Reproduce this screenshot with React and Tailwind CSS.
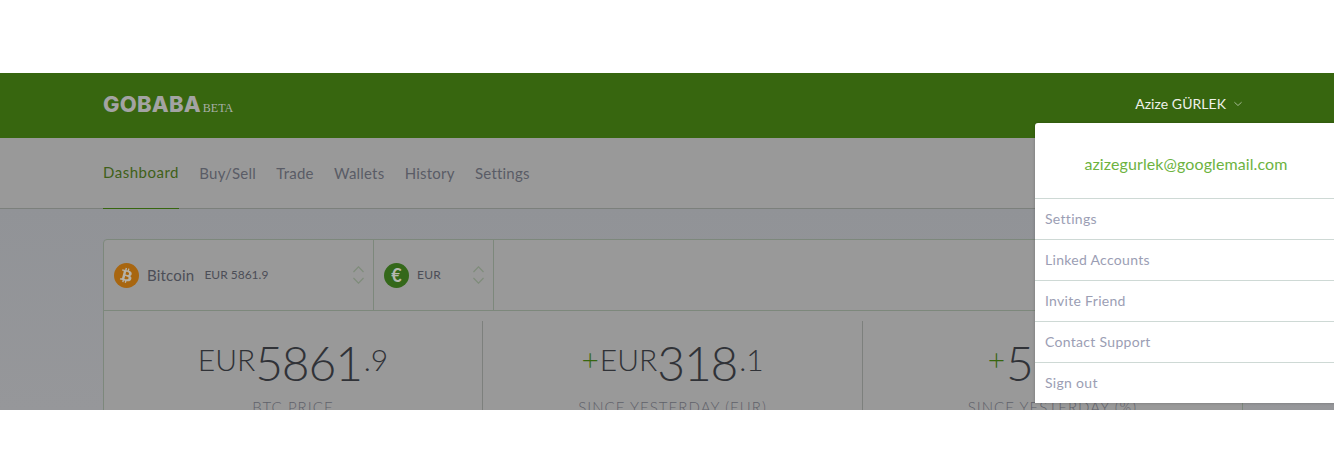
import React from "react";
import { ChevronDown } from "lucide-react";
import { FaBtc } from "react-icons/fa";

const nav = ["Buy/Sell", "Trade", "Wallets", "History", "Settings"];
const menu = ["Settings", "Linked Accounts", "Invite Friend", "Contact Support", "Sign out"];

function Updown() {
  return (
    <svg width="11" height="18" viewBox="0 0 11 18" fill="none" stroke="#7f8c7b" strokeWidth="1.2" className="block">
      <path d="M0.5 6 L5.5 0.8 L10.5 6" />
      <path d="M0.5 12 L5.5 17.2 L10.5 12" />
    </svg>
  );
}

function Stat({ plus, cur, big, small, label, className }) {
  return (
    <div className={`h-full flex flex-col items-center ${className}`}>
      <div className="flex items-start text-[#303237] h-[62px] pt-[18px] leading-none font-light">
        {plus && <span className="text-[30px] mt-[5px] text-[#37660f] mr-[1px]">+</span>}
        {cur && <span className="text-[30px] mt-[5px]">{cur}</span>}
        <span className="text-[48px] tracking-[-1.2px]">{big}</span>
        <span className="text-[30px] mt-[5px] ml-[2px]">{small}</span>
      </div>
      <div className="mt-[14px] text-[15px] tracking-[1.05px] font-light text-[#5f616a] uppercase leading-5 whitespace-nowrap">{label}</div>
    </div>
  );
}

export default function App() {
  return (
    <div className="h-[460px] bg-white pt-[73px] overflow-hidden" style={{ fontFamily: "Lato, sans-serif" }}>
      <div className="relative w-[1334px] h-[337px] overflow-hidden bg-[#999999]">
        <header className="h-[65px] bg-[#37660f] flex items-center justify-between pl-[103px] pr-[90px]">
          <div className="flex items-baseline pb-[2px]">
            <span className="text-[22px] font-extrabold text-[#a3a3a3] tracking-[0.2px] leading-none" style={{ fontFamily: "Inter, sans-serif" }}>GOBABA</span>
            <span className="ml-[2px] text-[12px] text-[#a9b0a8]" style={{ fontFamily: "'Liberation Serif', serif" }}>BETA</span>
          </div>
          <div className="flex items-center gap-[6px] text-[14px] tracking-[0.05px] text-[#eef1ea] pb-[4px]">
            <span>Azize GÜRLEK</span>
            <ChevronDown size={12} strokeWidth={1.25} className="text-[#dbe3d3] scale-x-110" />
          </div>
        </header>

        <nav className="h-[71px] border-b border-[#7c807c] pl-[103px] flex gap-[20.4px] bg-[#999999]">
          <div className="h-[71px] flex items-center text-[15px] tracking-[0.5px] pb-[1px] text-[#3f6018] border-b border-[#37660f]">Dashboard</div>
          {nav.map((n) => (
            <div key={n} className="h-[71px] flex items-center text-[15px] tracking-[0.2px] pb-[1px] text-[#5a5c66]">
              {n}
            </div>
          ))}
        </nav>

        <main className="bg-gradient-to-b from-[#919397] to-[#96979a] h-[201px] pt-[30px] px-[103px]">
          <div className="w-[1140px] h-[300px] border border-[#7d887c] rounded-tl-[4px] bg-[#999999]">
            <div className="h-[71px] border-b border-[#7d887c] flex">
              <div className="w-[270px] border-r border-[#7d887c] flex items-center pl-[10px] pr-[9px]">
                <div className="w-[25px] h-[25px] rounded-full bg-[#a86610] flex items-center justify-center text-[#b5b2a8]">
                  <FaBtc size={15} className="rotate-[14deg]" />
                </div>
                <span className="ml-[8px] text-[15px] tracking-[0.2px] text-[#4c4e57]">Bitcoin</span>
                <span className="ml-[10px] text-[12px] text-[#4c4e57]">EUR 5861.9</span>
                <div className="ml-auto"><Updown /></div>
              </div>
              <div className="w-[120px] border-r border-[#7d887c] flex items-center pl-[10px] pr-[9px]">
                <div className="w-[25px] h-[25px] rounded-full bg-[#34681a] flex items-center justify-center text-[#b5b8b0] text-[18px] font-bold leading-none">€</div>
                <span className="ml-[8px] text-[12px] tracking-[0.2px] text-[#4c4e57]">EUR</span>
                <div className="ml-auto"><Updown /></div>
              </div>
            </div>
            <div className="pt-[10px] h-[120px] flex">
              <Stat cur="EUR" big="5861" small=".9" label="BTC Price" className="w-[379px] border-r border-[#7d807d]" />
              <Stat plus cur="EUR" big="318" small=".1" label="Since yesterday (EUR)" className="w-[380px] border-r border-[#7d807d]" />
              <Stat plus big="5" small=".749%" label="Since yesterday (%)" className="flex-1" />
            </div>
          </div>
        </main>

        <div className="absolute left-[1035px] top-[50px] w-[304px] bg-white rounded-tl-[3px] shadow-[0_0_3px_rgba(0,0,0,0.25)]">
          <div className="h-[75px] flex items-center justify-center text-[16px] tracking-[0.1px] text-[#6db33f] pr-[2px] pt-[6px]">
            azizegurlek@googlemail.com
          </div>
          {menu.map((m) => (
            <div key={m} className="h-[41px] border-t border-[#ced9d5] flex items-center pl-[10px] pb-[2px] text-[14px] tracking-[0.3px] text-[#9b9eb4]">
              {m}
            </div>
          ))}
        </div>
      </div>
    </div>
  );
}
